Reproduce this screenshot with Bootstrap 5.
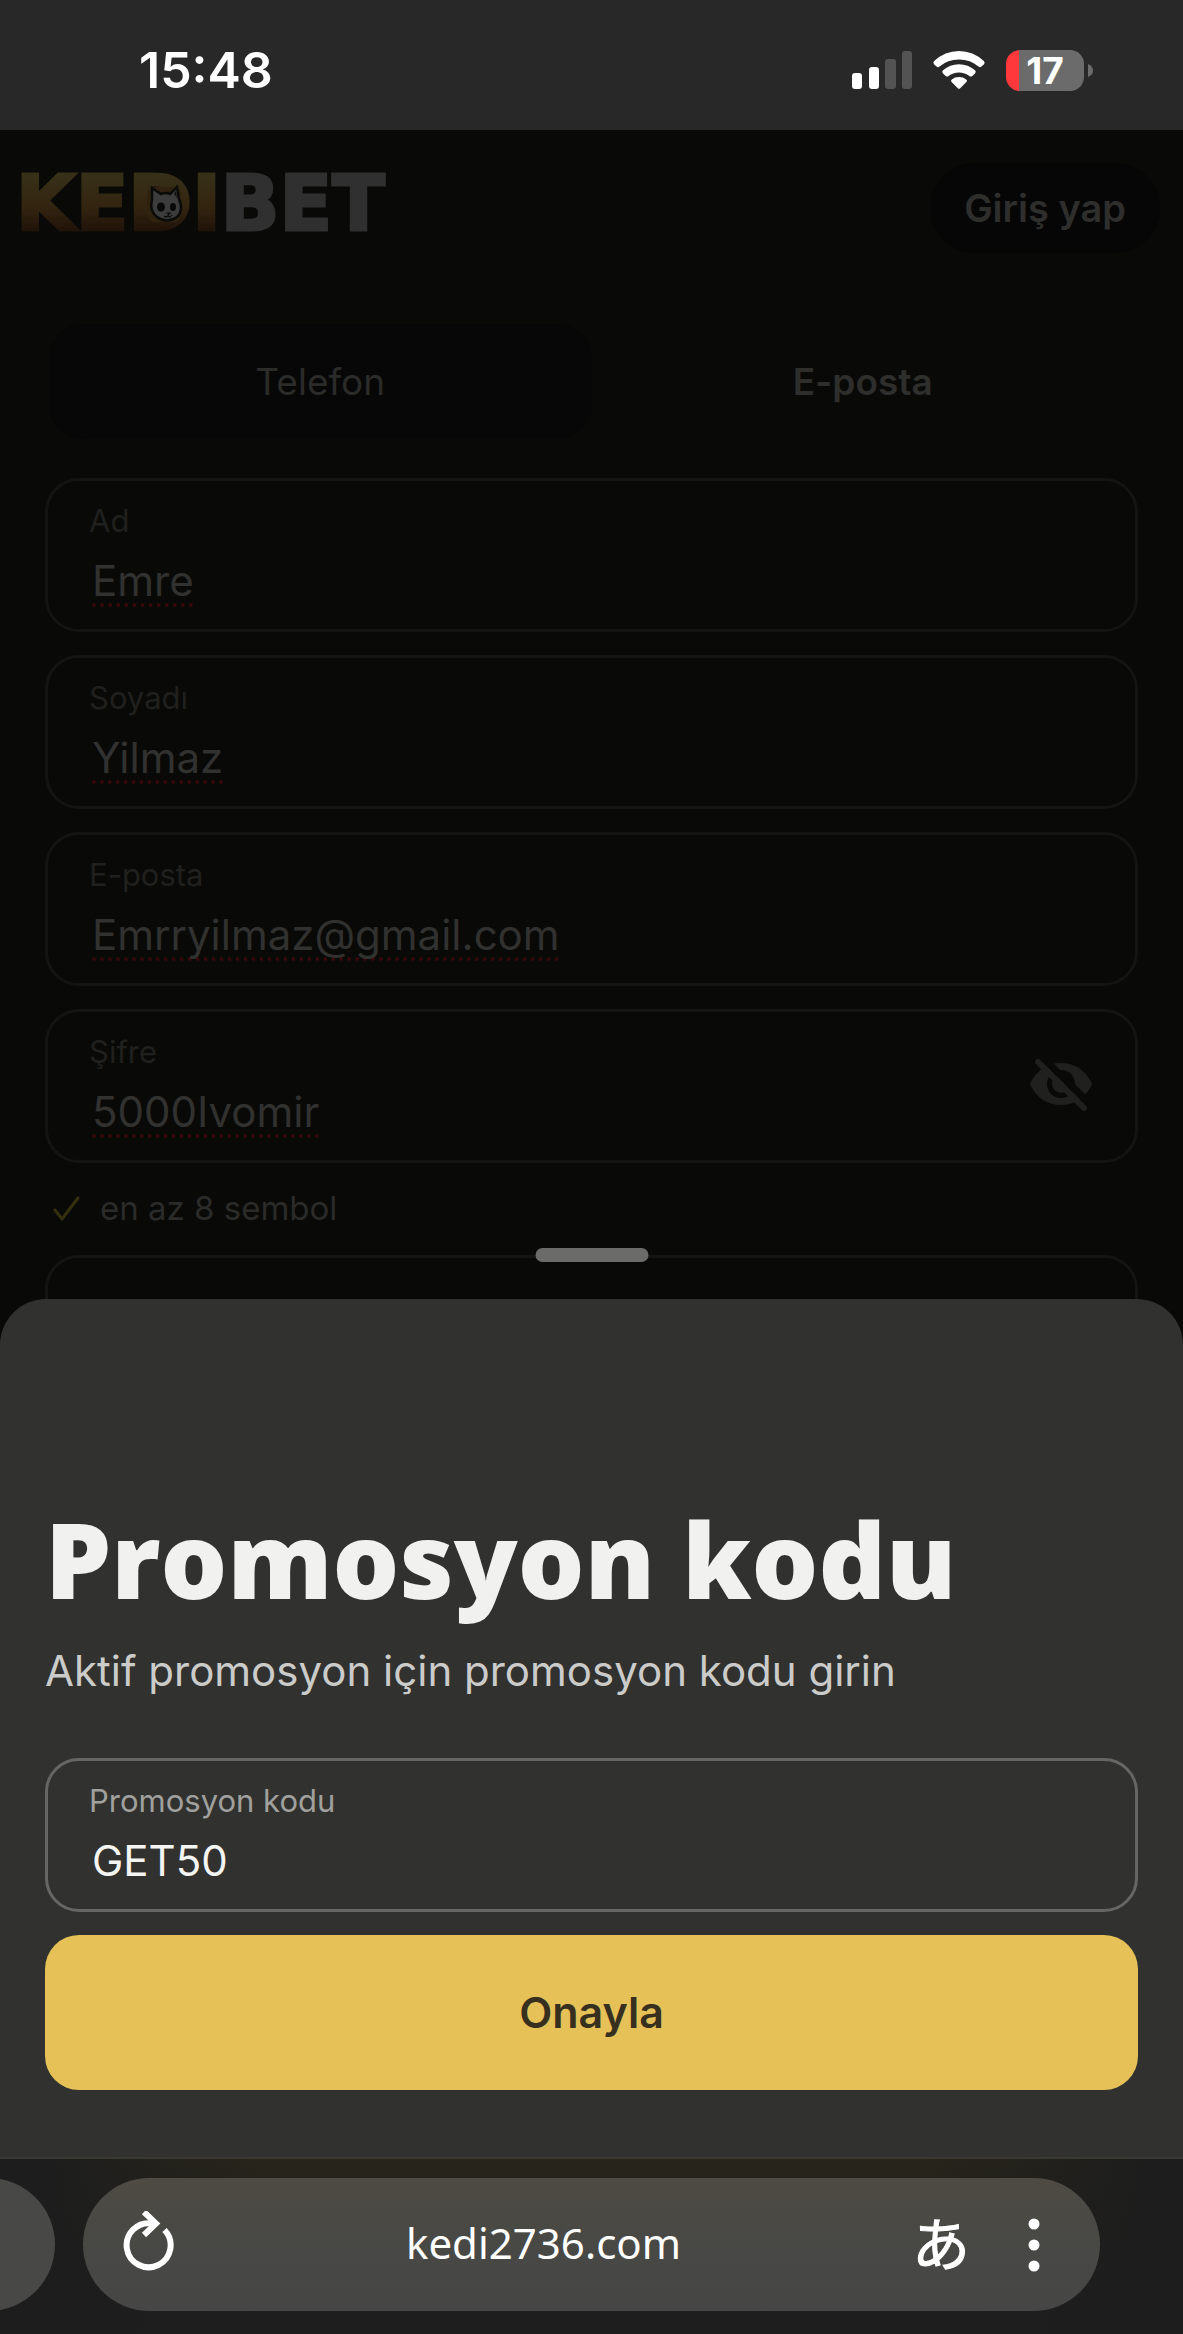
<!DOCTYPE html>
<html lang="tr">
<head>
<meta charset="utf-8">
<meta name="viewport" content="width=device-width, initial-scale=1">
<title>Kedibet – Promosyon kodu</title>
<link href="https://cdn.jsdelivr.net/npm/bootstrap@5.3.0/dist/css/bootstrap.min.css" rel="stylesheet">
<style>
  body { background: #090907; color: #fff; font-family: Inter, "Noto Sans", sans-serif; }
  svg { display: block; flex: none; }

  .status-bar { height: 130px; padding: 10px 90px 0 139px; background: #282828; }
  .status-time { font-size: 50px; line-height: 60px; font-weight: 600; }
  .status-icons { gap: 20px; }
  .battery { width: 78px; height: 41px; border-radius: 14px; background: linear-gradient(90deg, #ff383c 13px, #6b6b6b 13px); font-size: 37px; line-height: 41px; font-weight: 700; }

  .site-head { height: 156px; padding: 0 23px 0 16px; }
  .logo-link { font-family: "DejaVu Sans", sans-serif; font-size: 77px; line-height: 76px; font-weight: 700; padding-bottom: 8px; -webkit-text-stroke: 3px transparent; }
  .logo-gold { background: linear-gradient(#373018 20%, #332410 55%, #1d1008 84%); -webkit-background-clip: text; background-clip: text; color: transparent; }
  .logo-grey { color: #303030; -webkit-text-stroke-color: #303030; }
  .logo-cat { left: 127px; top: 18px; }
  .login-btn, .login-btn:hover { background: #060606; color: #2e2e2d; font-size: 38px; line-height: 46px; font-weight: 600; padding: 22px 34px; border: 0; }

  .form-area { padding: 38px 45px 0; }
  .tab-strip { margin-bottom: 39px; padding: 0 4px; border-radius: 34px; }
  .tab-btn { height: 115px; border: 0; border-radius: 34px; background: transparent; color: #2b2b2a; font-size: 37px; }
  .tab-left { background: #070707; }
  .tab-on { font-weight: 600; color: #2e2e2d; }

  .stack { gap: 23px; }
  .field-box { border: 3px solid #141413; border-radius: 34px; padding: 20px 41px; }
  .field-box label { display: block; font-size: 31px; line-height: 40px; margin-bottom: 12px; color: #20201f; }
  .field-box input { display: block; width: 100%; height: 56px; border: 0; outline: 0; padding: 0 0 0 3px; background: transparent; font-size: 42px; line-height: 56px; color: #313130; }
  .misspelt { text-decoration: underline dotted #35090b 4px; text-underline-offset: 7px; text-decoration-skip-ink: none; }
  .eye-btn { background: none; border: 0; padding: 0; color: #20201f; }
  .hint-row { height: 46px; gap: 20px; padding-left: 8px; font-size: 33px; color: #2b2b2a; }

  .sheet { background: #31312f; border-radius: 46px 46px 0 0; padding: 201px 45px 67px; }
  .grabber { width: 113px; height: 14px; top: -51px; background: #6b6b69; }
  .sheet h1 { font-family: "Open Sans", Lato, sans-serif; font-weight: 800; font-size: 105px; line-height: 118px; margin: 0 0 25px; color: #f1f1ef; }
  .sheet p { font-size: 42px; line-height: 56px; margin: 0 0 59px; color: #cbcbc9; }
  .sheet .field-box { border-color: #666664; }
  .sheet .field-box label { color: #a0a09e; }
  .sheet .field-box input { color: #f4f4f2; }
  .confirm-btn, .confirm-btn:hover { height: 155px; border: 0; border-radius: 34px; background: #e5c157; color: #37301f; font-size: 43px; font-weight: 600; }

  .browser-bar { height: 177px; border-top: 2px solid #3a3934; padding: 19px 83px 23px 0; gap: 28px; background: linear-gradient(90deg, #1d1d1d 4%, transparent 22%, transparent 78%, #1d1d1d 97%), linear-gradient(#27251a, #1e1e1e 60%); }
  .tab-edge { width: 133px; height: 133px; margin-left: -78px; background: #484847; }
  .address-pill { height: 133px; border-radius: 67px; padding: 0 60px 0 40px; background: linear-gradient(#4d4b43, #484845 50%, #464646); }
  .address-pill button { background: none; border: 0; padding: 0; color: #fff; }
  .address-text { font-family: "Noto Sans", "Open Sans", sans-serif; font-size: 42px; line-height: 56px; height: 60px; padding: 0 0 4px; min-width: 0; border: 0; background: none; color: #fff; outline: 0; }
  .address-pill .translate-glyph { font-family: "Noto Sans CJK JP", sans-serif; font-size: 58px; line-height: 60px; padding-bottom: 8px; margin-right: 58px; -webkit-text-stroke: 1px #fff; }
</style>
<script src="https://cdn.jsdelivr.net/npm/bootstrap@5.3.0/dist/js/bootstrap.bundle.min.js"></script>
</head>
<body class="d-flex flex-column min-vh-100">

<div class="status-bar d-flex justify-content-between align-items-center">
  <div class="status-time">15:48</div>
  <div class="status-icons d-flex align-items-center">
    <svg width="60" height="38" viewBox="0 0 60 38" fill="#fff"><rect y="22" width="10" height="16" rx="3"/><rect x="17" y="16" width="10" height="22" rx="3"/><rect x="33" y="8" width="11" height="30" rx="3" fill="#535353"/><rect x="50" width="10" height="38" rx="3" fill="#535353"/></svg>
    <svg width="54" height="40" viewBox="0 0 54 40" fill="#fff"><path d="M2.2 14.500Q.4 12.700 2.200 11Q12.800 1 27 1T51.800 11Q53.600 12.700 51.800 14.500L49.400 16.600Q47.900 17.800 46.500 16.500Q38.400 9.500 27 9.500T7.500 16.500Q6.100 17.800 4.600 16.600Z"/><path d="M11 23.400Q9.400 21.800 11 20.300Q17.800 14.200 27 14.200T43 20.300Q44.600 21.800 43 23.400L40.300 25.900Q38.900 27.100 37.400 25.900Q33 22.400 27 22.400T16.600 25.900Q15.100 27.100 13.700 25.900Z"/><path d="M19.600 31.900Q18.200 30.400 19.800 29.400Q22.800 27 27 27T34.200 29.400Q35.800 30.400 34.400 31.900L28.200 38.300Q27 39.400 25.800 38.300Z"/></svg>
    <div class="d-flex align-items-center">
      <div class="battery text-center">17</div>
      <svg class="ms-1" width="5" height="13" viewBox="0 0 5 13" fill="#6b6b6b"><path d="M0 0Q5 2 5 6.500T0 13Z"/></svg>
    </div>
  </div>
</div>

<main class="flex-grow-1 position-relative overflow-hidden">
  <header class="site-head d-flex align-items-center justify-content-between">
    <a href="#" class="logo-link position-relative text-decoration-none"><span class="logo-gold">KEDI</span><span class="logo-grey">BET</span>
      <svg class="logo-cat position-absolute" width="46" height="42" viewBox="-6 -2 46 42"><rect x="-2" y="1" width="34" height="35" rx="8" fill="#2f220f"/><path d="M3 2L12 8Q17 6 21 8L28 1L30 13Q35 25 28 31Q18 38 8 31Q0 25 3 14Z" fill="#3c3c3c" stroke="#0a0a09" stroke-width="2.500"/><path d="M25 8L27 5L28 12Z" fill="#111"/><ellipse cx="12" cy="21" rx="4" ry="4.500" fill="#080808"/><ellipse cx="24" cy="21" rx="3" ry="4" fill="#080808"/><path d="M17 27h4l-2 2v1q-2 2-4 0m4 0q2 2 4-1" fill="none" stroke="#0a0a09" stroke-width="1.200"/></svg>
    </a>
    <button type="button" class="btn login-btn rounded-pill">Giriş yap</button>
  </header>

  <form class="form-area">
    <div class="tab-strip d-flex">
      <button type="button" class="tab-btn tab-left w-50">Telefon</button>
      <button type="button" class="tab-btn tab-on w-50">E-posta</button>
    </div>
    <div class="stack d-flex flex-column">
      <div class="field-box"><label for="ad">Ad</label><input id="ad" class="misspelt" type="text" value="Emre" spellcheck="false"></div>
      <div class="field-box"><label for="soyad">Soyadı</label><input id="soyad" class="misspelt" type="text" value="Yilmaz" spellcheck="false"></div>
      <div class="field-box"><label for="eposta">E-posta</label><input id="eposta" class="misspelt" type="text" value="Emrryilmaz@gmail.com" spellcheck="false"></div>
      <div class="field-box d-flex align-items-center">
        <div class="flex-grow-1"><label for="sifre">Şifre</label><input id="sifre" class="misspelt" type="text" value="5000Ivomir" spellcheck="false"></div>
        <button type="button" class="eye-btn" aria-label="Şifreyi gizle">
          <svg width="64" height="54" viewBox="0 0 64 54"><path d="M.8 27Q-.4 25 .8 23Q11 4 31 4T61.200 23Q62.400 25 61.200 27Q51 46 31 46T.8 27Z" fill="currentColor"/><circle cx="31" cy="25" r="14" fill="#090907"/><circle cx="31" cy="25" r="9" fill="currentColor"/><circle cx="35" cy="20" r="3" fill="#090907"/><path d="M12-2L62 47" stroke="#090907" stroke-width="7"/><path d="M8 3L54 49" stroke="currentColor" stroke-width="6" stroke-linecap="round"/></svg>
        </button>
      </div>
      <div class="hint-row d-flex align-items-center">
        <svg width="27" height="27" viewBox="0 0 27 27" fill="none" stroke="#34300f" stroke-width="3" stroke-linecap="round" stroke-linejoin="round"><path d="M2 14L9 23L25 2"/></svg>
        <span>en az 8 sembol</span>
      </div>
      <div class="field-box"><label for="promo-arka">&nbsp;</label><input id="promo-arka" type="text" aria-label="Promosyon kodu"></div>
    </div>
  </form>

  <section class="sheet position-absolute bottom-0 start-0 end-0">
    <div class="grabber position-absolute start-50 translate-middle-x rounded-pill"></div>
    <h1>Promosyon kodu</h1>
    <p>Aktif promosyon için promosyon kodu girin</p>
    <div class="stack d-flex flex-column">
      <div class="field-box"><label for="promo">Promosyon kodu</label><input id="promo" type="text" value="GET50" spellcheck="false"></div>
      <button type="button" class="btn confirm-btn w-100">Onayla</button>
    </div>
  </section>
</main>

<nav class="browser-bar d-flex">
  <div class="tab-edge flex-shrink-0 rounded-circle"></div>
  <div class="address-pill flex-grow-1 d-flex align-items-center">
    <button type="button" aria-label="Yenile">
      <svg width="52" height="68" viewBox="0 2 52 68" fill="none" stroke="#fff" stroke-width="6"><path d="M41.500 21A22 22 0 1 1 29 14.500"/><path d="M21 3L33 14.500L21 26"/></svg>
    </button>
    <input class="address-text flex-grow-1 text-center" type="text" value="kedi2736.com" aria-label="Adres" spellcheck="false">
    <button type="button" class="translate-glyph" aria-label="Çevir">あ</button>
    <button type="button" aria-label="Menü">
      <svg width="12" height="56" viewBox="0 0 12 56" fill="#fff"><circle cx="6" cy="7" r="5.500"/><circle cx="6" cy="28" r="5.500"/><circle cx="6" cy="49" r="5.500"/></svg>
    </button>
  </div>
</nav>
</body>
</html>
